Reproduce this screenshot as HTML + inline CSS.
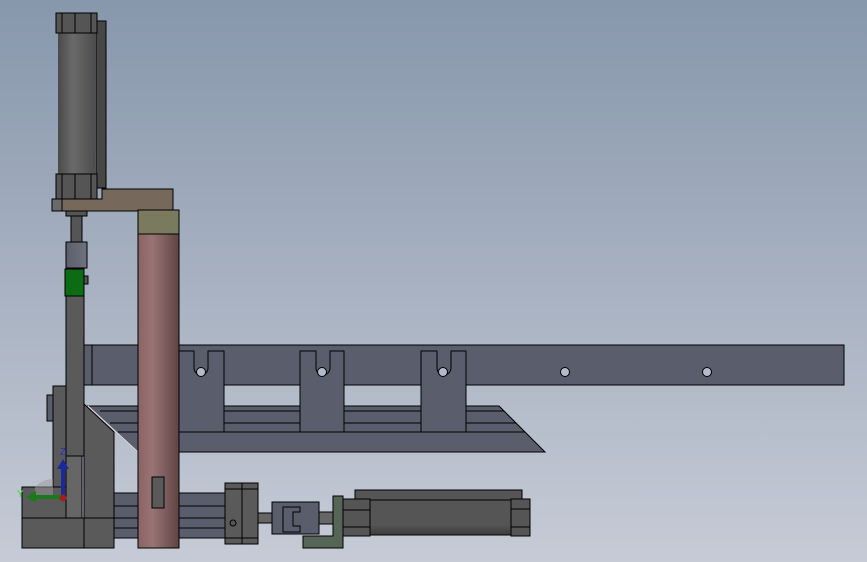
<!DOCTYPE html>
<html><head><style>
html,body{margin:0;padding:0;width:867px;height:562px;overflow:hidden}
body{background:linear-gradient(#8797ac 0%,#a7b1c1 50%,#c6cbd6 100%)}
svg{display:block}
</style></head><body>
<svg width="867" height="562" viewBox="0 0 867 562" xmlns="http://www.w3.org/2000/svg" stroke="#000" stroke-width="1">
<defs>
<linearGradient id="cyl" x1="0" x2="1" y1="0" y2="0"><stop offset="0" stop-color="#4a4a4a"/><stop offset="0.4" stop-color="#6a6a6a"/><stop offset="1" stop-color="#4d4d4d"/></linearGradient>
<linearGradient id="pole" x1="0" x2="1"><stop offset="0" stop-color="#8a6464"/><stop offset="0.35" stop-color="#9a7474"/><stop offset="1" stop-color="#5e4444"/></linearGradient>
<linearGradient id="hcyl" x1="0" x2="0" y1="0" y2="1"><stop offset="0" stop-color="#555"/><stop offset="0.7" stop-color="#555"/><stop offset="1" stop-color="#3c3c3c"/></linearGradient>
<linearGradient id="gblk" x1="0" x2="1"><stop offset="0" stop-color="#5c5f6b"/><stop offset="1" stop-color="#6e727e"/></linearGradient>
</defs>
<!-- tray -->
<polygon points="88,406 499,406 545,452 138,452" fill="#5a5e6c"/>
<line x1="88" y1="406" x2="138" y2="452" stroke="#eee"/>
<line x1="100" y1="411" x2="504" y2="411"/><line x1="110" y1="423" x2="516" y2="423"/><line x1="118" y1="432" x2="525" y2="432"/>
<!-- beam -->
<rect x="84" y="345" width="760" height="40" fill="#5a5e6c"/>
<line x1="92" y1="345" x2="92" y2="385"/>
<circle cx="565" cy="372" r="4.5" fill="#b4bccb"/><circle cx="707" cy="372" r="4.5" fill="#b4bccb"/>
<!-- U blocks -->
<g fill="#5a5e6c">
<path d="M178,351 H194 V368 A7,7 0 0 0 208,368 V351 H224 V432 H178 Z"/>
<path d="M300,351 H316 V368 A7,7 0 0 0 330,368 V351 H344 V432 H300 Z"/>
<path d="M421,351 H437 V368 A7,7 0 0 0 451,368 V351 H466 V432 H421 Z"/>
</g>
<circle cx="201" cy="372" r="4.5" fill="#b4bccb"/><circle cx="322" cy="372" r="4.5" fill="#b4bccb"/><circle cx="443" cy="372" r="4.5" fill="#b4bccb"/>
<!-- bottom cylinder rails (behind pole) -->
<rect x="114" y="493" width="112" height="45" fill="#5a5e6c"/>
<line x1="114" y1="506" x2="226" y2="506"/><line x1="114" y1="518" x2="226" y2="518"/><line x1="114" y1="528" x2="226" y2="528"/>
<!-- top cylinder -->
<rect x="96" y="21" width="10" height="167" fill="#474747"/>
<rect x="58" y="33" width="37" height="141" fill="url(#cyl)" stroke="none"/>
<rect x="56" y="13" width="41" height="20" fill="#555"/><line x1="62" y1="13" x2="62" y2="33"/><line x1="75" y1="13" x2="75" y2="33"/><line x1="91" y1="13" x2="91" y2="33"/>
<rect x="56" y="174" width="41" height="26" fill="#555"/><line x1="62" y1="174" x2="62" y2="200"/><line x1="75" y1="174" x2="75" y2="200"/><line x1="91" y1="174" x2="91" y2="200"/>
<!-- bracket -->
<rect x="52" y="199" width="10" height="12" fill="#6a6a6a"/>
<path d="M62,199 H102 V189 H173 V211 H62 Z" fill="#76685a"/>
<rect x="138" y="210" width="41" height="24" fill="#7a7a5e"/>
<rect x="138" y="234" width="41" height="314" fill="url(#pole)"/>
<rect x="152" y="477" width="12" height="31" fill="#5a5a5a"/>
<!-- rod / blocks -->
<rect x="66" y="211" width="21" height="5" fill="#555"/>
<rect x="71" y="216" width="11" height="26" fill="#555"/>
<rect x="66" y="242" width="21" height="26" fill="url(#gblk)"/>
<rect x="84" y="276" width="4" height="8" fill="#555"/>
<rect x="65" y="269" width="19" height="27" fill="#0d6b14"/>
<!-- left base -->
<rect x="47" y="395" width="6" height="26" fill="#5a5e6c"/>
<rect x="53" y="386" width="13" height="132" fill="#5a5a5a"/>
<rect x="66" y="296" width="18" height="160" fill="#5a5a5a"/>
<rect x="66" y="456" width="16" height="62" fill="#666"/>
<path d="M84,404 L114,432 V548 H84 Z" fill="#5a5a5a"/>
<rect x="22" y="487" width="44" height="31" fill="#5a5a5a"/>
<rect x="22" y="518" width="62" height="30" fill="#5a5a5a"/>
<rect x="84" y="518" width="30" height="30" fill="#5a5a5a"/>
<!-- flange etc -->
<rect x="225" y="483" width="33" height="61" fill="#5a5a5a"/><line x1="242" y1="483" x2="242" y2="544"/><line x1="225" y1="489" x2="258" y2="489"/><line x1="225" y1="538" x2="258" y2="538"/>
<circle cx="233" cy="523" r="3" fill="#555"/>
<rect x="258" y="513" width="14" height="10" fill="#666"/>
<rect x="272" y="502" width="47" height="32" fill="#5a5e6c"/>
<path d="M283,507 H300 V512 H293 V526 H300 V532 H283 Z" fill="#5a5e6c"/>
<rect x="319" y="512" width="14" height="12" fill="#666"/>
<path d="M333,496 H343 V548 H303 V536 H333 Z" fill="#566656"/>
<rect x="355" y="490" width="167" height="10" fill="#555"/>
<rect x="343" y="499" width="27" height="37" fill="#555"/><line x1="343" y1="510" x2="370" y2="510"/><line x1="343" y1="527" x2="370" y2="527"/>
<rect x="370" y="500" width="141" height="35" fill="url(#hcyl)"/>
<rect x="511" y="499" width="19" height="37" fill="#555"/><line x1="511" y1="509" x2="530" y2="509"/><line x1="511" y1="527" x2="530" y2="527"/>
<!-- triad -->
<path d="M53,479 A25,25 0 0 0 35,487 V497 H53 Z" fill="#999" opacity="0.5" stroke="none"/>
<line x1="63" y1="497" x2="63" y2="467" stroke="#1a2a9a" stroke-width="4"/>
<polygon points="57,469 69,469 63,459" fill="#1a2a9a" stroke="none"/>
<line x1="63" y1="497" x2="34" y2="497" stroke="#1a7a1a" stroke-width="4"/>
<polygon points="36,491 36,503 26,497" fill="#1a7a1a" stroke="none"/>
<circle cx="63" cy="498" r="3.5" fill="#a02020" stroke="none"/>
<text x="60" y="455" font-family="Liberation Sans,sans-serif" font-size="10" fill="#2030d0" stroke="none">Z</text>
<text x="17" y="497" font-family="Liberation Sans,sans-serif" font-size="10" fill="#30e030" stroke="none">Y</text>
</svg>
</body></html>
